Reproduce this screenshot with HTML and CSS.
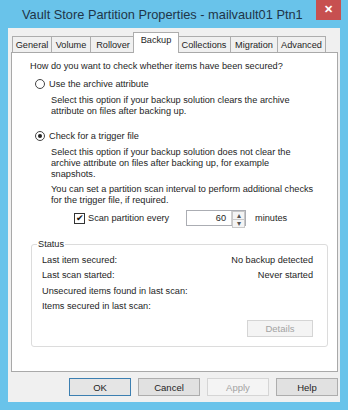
FILE: index.html
```html
<!DOCTYPE html>
<html lang="en">
<head>
    <meta charset="UTF-8">
    <title>Vault Store Partition Properties</title>
    <link rel="stylesheet" href="styles.css">
</head>
<body>

    <div class="window">
        <div class="titlebar">
            <span class="title">Vault Store Partition Properties - mailvault01 Ptn1</span>
            <span class="close">&#x2715;</span>
        </div>

        <div class="client">
            <ul class="tabs">
                <li class="tab w-general">General</li>
                <li class="tab w-volume">Volume</li>
                <li class="tab w-rollover">Rollover</li>
                <li class="tab w-backup active">Backup</li>
                <li class="tab w-collections">Collections</li>
                <li class="tab w-migration">Migration</li>
                <li class="tab w-advanced">Advanced</li>
            </ul>

            <div class="panel">
                <p class="question">How do you want to check whether items have been secured?</p>

                <div class="option">
                    <span class="radio"></span>Use the archive attribute
                </div>
                <p class="desc">Select this option if your backup solution clears the archive<br>attribute on files after backing up.</p>

                <div class="option second">
                    <span class="radio checked"></span>Check for a trigger file
                </div>
                <p class="desc">Select this option if your backup solution does not clear the<br>archive attribute on files after backing up, for example<br>snapshots.</p>
                <p class="desc gap">You can set a partition scan interval to perform additional checks<br>for the trigger file, if required.</p>

                <div class="scanrow">
                    <span class="scanlabel"><span class="checkbox">&#x2714;</span>Scan partition every</span>
                    <span class="spin">
                        <span class="spinvalue">60</span>
                        <span class="spinbtns">
                            <span class="spinbtn">&#x25B4;</span>
                            <span class="spinbtn">&#x25BE;</span>
                        </span>
                    </span>
                    <span class="unit">minutes</span>
                </div>

                <fieldset class="status">
                    <legend>Status</legend>
                    <div class="row"><span>Last item secured:</span><span>No backup detected</span></div>
                    <div class="row"><span>Last scan started:</span><span>Never started</span></div>
                    <div class="row"><span>Unsecured items found in last scan:</span><span></span></div>
                    <div class="row"><span>Items secured in last scan:</span><span></span></div>
                    <div class="detailsrow">
                        <button class="btn disabled details">Details</button>
                    </div>
                </fieldset>
            </div>

            <div class="buttons">
                <button class="btn default">OK</button>
                <button class="btn">Cancel</button>
                <button class="btn disabled">Apply</button>
                <button class="btn">Help</button>
            </div>
        </div>
    </div>

</body>
</html>
```

FILE: styles.css
```css
body {
    margin: 0;
    font-family: "Liberation Sans", Arial, sans-serif;
    font-size: 9.2px;
    color: #1e1e1e;
}

.window {
    width: 348px;
    height: 410px;
    box-sizing: border-box;
    background-color: #69c3ea;
    padding: 0 8px 8px 8px;
    display: flex;
    flex-direction: column;
}

.titlebar {
    height: 28px;
    display: flex;
    align-items: flex-start;
    margin: 0 -8px;
    padding-left: 22px;
}

.title {
    font-size: 12.8px;
    line-height: 30px;
    color: #1f3548;
}

.close {
    margin-left: auto;
    margin-right: 7px;
    width: 25px;
    height: 20px;
    background-color: #c75050;
    color: #fff;
    font-size: 11px;
    font-weight: bold;
    text-align: center;
    line-height: 19px;
}

.client {
    flex: 1;
    background-color: #f0f0f0;
    display: flex;
    flex-direction: column;
}

/* tabs */
.tabs {
    list-style: none;
    margin: 5px 0 0 4px;
    padding: 0;
    height: 19px;
    display: flex;
    align-items: flex-end;
}

.tab {
    height: 16px;
    box-sizing: border-box;
    border: 1px solid #adadad;
    border-bottom: none;
    margin-right: -1px;
    background-color: #f0f0f0;
    text-align: center;
    line-height: 16px;
    position: relative;
}

.tab.active {
    height: 21px;
    margin: 0 -2px -1px -2px;
    background-color: #fff;
    line-height: 15px;
    z-index: 1;
}

.w-general { width: 40px; }
.w-volume { width: 40px; }
.w-rollover { width: 46px; }
.w-backup { width: 46px; }
.w-collections { width: 54px; }
.w-migration { width: 48px; }
.w-advanced { width: 49px; }

/* tab page */
.panel {
    margin: 0 2px 0 3px;
    height: 320px;
    box-sizing: border-box;
    background-color: #fff;
    border: 1px solid #a9a9a9;
    padding: 7px 9px 0 18px;
}

p {
    margin: 0;
    line-height: 11px;
    white-space: nowrap;
}

.question {
    line-height: 13px;
}

.option {
    display: flex;
    align-items: center;
    height: 13px;
    margin-top: 4px;
    padding-left: 5px;
}

.option.second {
    margin-top: 12px;
}

.radio {
    width: 10px;
    height: 10px;
    box-sizing: border-box;
    border: 1px solid #444;
    border-radius: 50%;
    margin-right: 4px;
    display: flex;
    align-items: center;
    justify-content: center;
}

.radio.checked::after {
    content: "";
    width: 4px;
    height: 4px;
    border-radius: 50%;
    background-color: #222;
}

.desc {
    margin-top: 5px;
    padding-left: 21px;
}

.desc.gap {
    margin-top: 4px;
}

.scanrow {
    display: flex;
    align-items: center;
    height: 16px;
    margin-top: 4px;
    padding-left: 44px;
}

.scanlabel {
    width: 112px;
    display: flex;
    align-items: center;
}

.checkbox {
    width: 11px;
    height: 11px;
    box-sizing: border-box;
    border: 1px solid #333;
    margin-right: 3px;
    font-size: 9px;
    line-height: 9px;
    text-align: center;
    color: #111;
}

.spin {
    width: 60px;
    height: 16px;
    box-sizing: border-box;
    border: 1px solid #abadb3;
    display: flex;
}

.spinvalue {
    flex: 1;
    text-align: right;
    padding-right: 5px;
    line-height: 14px;
}

.spinbtns {
    width: 13px;
    display: flex;
    flex-direction: column;
    border-left: 1px solid #d0d0d0;
}

.spinbtn {
    flex: 1;
    font-size: 8px;
    line-height: 7px;
    text-align: center;
    color: #555;
    background-color: #f4f4f4;
    border: 1px solid #c8c8c8;
    margin: 0 0 -1px 0;
}

.unit {
    margin-left: 9px;
}

/* status group */
.status {
    margin: 13px 0 0 1px;
    width: 297px;
    height: 108px;
    box-sizing: border-box;
    border: 1px solid #dcdcdc;
    border-radius: 3px;
    padding: 3px 14px 0 10px;
}

.status legend {
    padding: 0 1px;
    margin-left: -5px;
    line-height: 11px;
}

.row {
    display: flex;
    justify-content: space-between;
    height: 15.3px;
    line-height: 15px;
}

.detailsrow {
    display: flex;
    justify-content: flex-end;
    margin-top: 6px;
}

/* buttons */
.btn {
    width: 62px;
    height: 18px;
    padding: 0;
    font-family: inherit;
    font-size: 9.5px;
    color: #1e1e1e;
    background-color: #e1e1e1;
    border: 1px solid #adadad;
    outline: none;
}

.btn.default {
    border-color: #3c7fb1;
    background-color: #e5e5e5;
}

.btn.disabled {
    color: #a3a3a3;
    background-color: #f4f4f4;
    border-color: #d5d5d5;
}

.details {
    width: 66px;
    height: 17px;
}

.buttons {
    display: flex;
    justify-content: flex-end;
    gap: 7px;
    margin: 6px 2px 0 0;
}
```
